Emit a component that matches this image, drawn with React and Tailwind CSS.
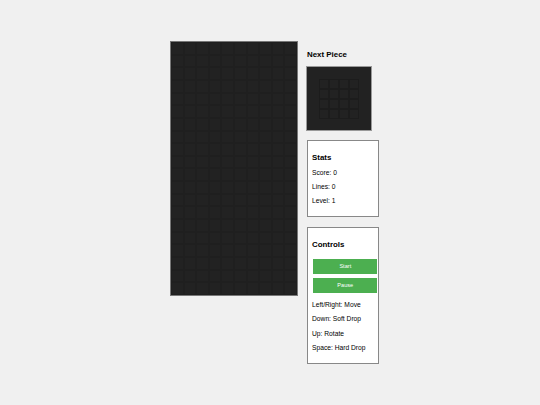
import React from 'react';

const font = { fontFamily: '"Liberation Sans", Arial, sans-serif' };

const boardCells = Array.from({ length: 200 });
const nextCells = Array.from({ length: 16 });

export default function App() {
    return (
        <div className="w-full h-[405px] bg-[#f0f0f0] text-black overflow-hidden" style={font}>
            <div className="flex items-start gap-[8px] pl-[170px] pt-[41px]">
                {/* Board */}
                <div className="w-[128px] h-[255px] border border-[#777] bg-[#222] grid grid-cols-10 grid-rows-[repeat(20,minmax(0,1fr))]">
                    {boardCells.map((_, i) => (
                        <div key={i} className="border-[0.5px] border-[#1f1f1f]"></div>
                    ))}
                </div>

                {/* Sidebar */}
                <div className="w-[73px] flex flex-col">
                    <h3 className="mt-[8.5px] ml-[1px] text-[7.9px] leading-[9px] font-bold">Next Piece</h3>
                    <div className="mt-[7.5px] w-[66px] h-[65px] border border-[#999] bg-[#222] flex items-center justify-center">
                        <div className="grid grid-cols-4 w-[40px] h-[40px]">
                            {nextCells.map((_, i) => (
                                <div key={i} className="border-[0.5px] border-[#1c1c1c]"></div>
                            ))}
                        </div>
                    </div>

                    <div className="mt-[9px] ml-[1px] w-[72px] h-[77px] border border-[#888] bg-white px-[4px] pt-[12px] text-[6.7px]">
                        <h3 className="text-[7.9px] leading-[9px] font-bold">Stats</h3>
                        <p className="mt-[7px] leading-[8px]">Score: 0</p>
                        <p className="mt-[6.2px] leading-[8px]">Lines: 0</p>
                        <p className="mt-[6.2px] leading-[8px]">Level: 1</p>
                    </div>

                    <div className="mt-[9.5px] ml-[1px] w-[72px] h-[137px] border border-[#888] bg-white px-[4px] pt-[12px] text-[6.7px]">
                        <h3 className="text-[7.9px] leading-[9px] font-bold">Controls</h3>
                        <button className="mt-[10px] ml-[1.3px] w-[64px] h-[15px] bg-[#4CAF50] text-white text-[5.6px] leading-[15px] block">Start</button>
                        <button className="mt-[4px] ml-[1.3px] w-[64px] h-[15px] bg-[#4CAF50] text-white text-[5.6px] leading-[15px] block">Pause</button>
                        <p className="mt-[8.7px] leading-[8px]">Left/Right: Move</p>
                        <p className="mt-[6.3px] leading-[8px]">Down: Soft Drop</p>
                        <p className="mt-[6.3px] leading-[8px]">Up: Rotate</p>
                        <p className="mt-[6.3px] leading-[8px]">Space: Hard Drop</p>
                    </div>
                </div>
            </div>
        </div>
    );
}
